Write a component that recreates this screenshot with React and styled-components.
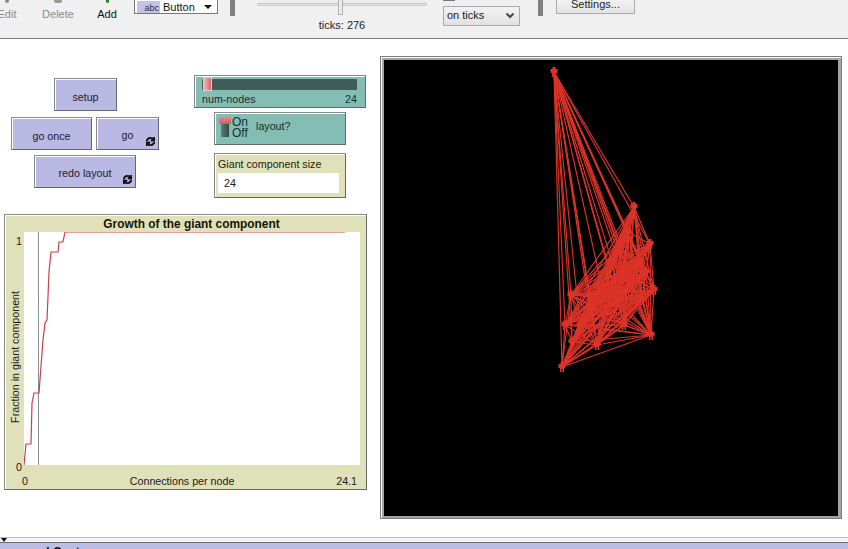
import React from 'react';
import styled, { createGlobalStyle } from 'styled-components';
import { FaSync } from 'react-icons/fa';

const GlobalStyle = createGlobalStyle`
  html, body {
    margin: 0;
    padding: 0;
    background: white;
    overflow: hidden;
  }
  body {
    font-family: "Liberation Sans", Arial, sans-serif;
    font-size: 10.7px;
    color: #1a1a1a;
  }
`;

// turtle positions in page pixels
const NODES = [
  [554, 72], [634, 207], [650, 244], [654, 290], [651, 335], [571, 295],
  [565, 325], [597, 345], [562, 367], [624, 325], [628, 232], [612, 262],
  [640, 262], [630, 285], [590, 312], [642, 300], [620, 248], [580, 325],
  [603, 292], [618, 300], [622, 272], [572, 342], [646, 272], [590, 296],
];

const EDGES = NODES.flatMap((a, i) => NODES.slice(i + 1).map(b => [a, b]));

const CURVE = [
  [24, 465], [26, 444], [31, 444], [32, 403], [34, 393], [39, 393], [42, 353],
  [43, 340], [45, 323], [47, 320], [49, 272], [51, 252], [58, 252], [59, 242],
  [63, 242], [65, 232], [345, 232],
].map(p => p.join(',')).join(' ');

const App = () => {
  return (
    <Page>
      <GlobalStyle />
      <Toolbar>
        <Tool $w={24} $ml={-5}>
          <ToolIcon $color="#8a8a8a" $size={4} />
          Edit
        </Tool>
        <Tool $w={40} $ml={19}>
          <ToolIcon $color="#9a9a9a" $size={8} />
          Delete
        </Tool>
        <Tool $w={40} $ml={9} $active>
          <ToolIcon $color="#2e7d3a" $size={3} />
          Add
        </Tool>
        <WidgetPicker>
          <PickerSwatch>abc</PickerSwatch>
          <PickerText>Button</PickerText>
          <PickerArrow />
        </WidgetPicker>
        <Divider $ml={12} />
        <SpeedBlock>
          <SpeedTrack>
            <SpeedThumb />
          </SpeedTrack>
          <Ticks>ticks: 276</Ticks>
        </SpeedBlock>
        <UpdateBlock>
          <UpdateCheck />
          <UpdateSelect>
            on ticks
            <svg width="10" height="7" viewBox="0 0 10 7">
              <path d="M1.5 1.5 L5 5 L8.5 1.5" fill="none" stroke="#444" strokeWidth="2" />
            </svg>
          </UpdateSelect>
        </UpdateBlock>
        <Divider $ml={18} />
        <SettingsButton>Settings...</SettingsButton>
      </Toolbar>

      <Canvas>
        <SimButton $x={54} $y={39} $w={63}>setup</SimButton>
        <SimButton $x={11} $y={78} $w={81}>go once</SimButton>
        <SimButton $x={96} $y={78} $w={63} $forever>
          go
          <LoopIcon><FaSync size={9} /></LoopIcon>
        </SimButton>
        <SimButton $x={34} $y={116} $w={102} $forever>
          redo layout
          <LoopIcon><FaSync size={9} /></LoopIcon>
        </SimButton>

        <Slider>
          <SliderTrack>
            <SliderKnob />
          </SliderTrack>
          <SliderRow>
            <span>num-nodes</span>
            <span>24</span>
          </SliderRow>
        </Slider>

        <Switch>
          <SwitchToggle>
            <SwitchHead />
          </SwitchToggle>
          <SwitchStates>
            <span>On</span>
            <span>Off</span>
          </SwitchStates>
          <SwitchLabel>layout?</SwitchLabel>
        </Switch>

        <Monitor>
          <MonitorLabel>Giant component size</MonitorLabel>
          <MonitorValue>24</MonitorValue>
        </Monitor>

        <Plot>
          <PlotTitle>Growth of the giant component</PlotTitle>
          <YAxis>
            <span>1</span>
            <YLabel>Fraction in giant component</YLabel>
            <span>0</span>
          </YAxis>
          <PlotArea>
            <svg width="336" height="233" viewBox="24 232 336 233">
              <line x1="38.5" y1="232" x2="38.5" y2="465" stroke="#8c8c8c" />
              <polyline points={CURVE} fill="none" stroke="#c8404a" strokeWidth="1.2" />
            </svg>
          </PlotArea>
          <XAxis>
            <span>0</span>
            <span>Connections per node</span>
            <span>24.1</span>
          </XAxis>
        </Plot>

        <View>
          <svg width="454" height="456" viewBox="384 60 454 456">
            {EDGES.map(([a, b], i) => (
              <line key={i} x1={a[0]} y1={a[1]} x2={b[0]} y2={b[1]} stroke="#dc3328" strokeWidth="1.15" />
            ))}
            {NODES.map(([x, y], i) => (
              <path
                key={i}
                transform={`translate(${x} ${y})`}
                d="M-1.5 -5 H1.5 V-3 H3.5 V1 H2 V5 H0.5 V2 H-0.5 V5 H-2 V1 H-3.5 V-3 H-1.5 Z"
                fill="#dc3328"
              />
            ))}
          </svg>
        </View>
      </Canvas>

      <Sash>
        <SashArrow />
      </Sash>
      <CommandBar>Command Center</CommandBar>
    </Page>
  );
};

const Page = styled.div`
  width: 848px;
  height: 549px;
  display: flex;
  flex-direction: column;
  overflow: hidden;
`;

const Toolbar = styled.div`
  height: 38px;
  flex: none;
  display: flex;
  align-items: flex-start;
  background: #f0f0f0;
  border-bottom: 1px solid #7c7c7c;
  font-size: 11px;
  overflow: hidden;
`;

const Tool = styled.div`
  width: ${p => p.$w}px;
  margin-left: ${p => p.$ml}px;
  flex: none;
  display: flex;
  flex-direction: column;
  align-items: center;
  gap: 5px;
  line-height: 14px;
  margin-top: 0;
  color: ${p => (p.$active ? '#111' : '#8b8b8b')};
`;

const ToolIcon = styled.div`
  width: ${p => p.$size}px;
  height: 3px;
  margin-top: 0;
  margin-bottom: -1px;
  background: ${p => p.$color};
  border-radius: 0 0 2px 2px;
`;

const WidgetPicker = styled.div`
  width: 84px;
  height: 15px;
  margin-left: 7px;
  margin-top: -1px;
  flex: none;
  box-sizing: border-box;
  display: flex;
  align-items: center;
  background: white;
  border: 1px solid #777;
  padding-left: 2px;
`;

const PickerSwatch = styled.div`
  width: 23px;
  height: 12px;
  flex: none;
  background: #c3c3e6;
  font-size: 9px;
  line-height: 14px;
  text-align: right;
  padding-right: 1px;
  box-sizing: border-box;
  color: #2a2a4a;
`;

const PickerText = styled.div`
  margin-left: 3px;
  flex: 1;
  font-size: 11px;
  line-height: 12px;
  color: #111;
`;

const PickerArrow = styled.div`
  width: 0;
  height: 0;
  margin-right: 5px;
  border-left: 4px solid transparent;
  border-right: 4px solid transparent;
  border-top: 4px solid #111;
`;

const Divider = styled.div`
  width: 5px;
  height: 16px;
  margin-left: ${p => p.$ml}px;
  flex: none;
  background: #808080;
`;

const SpeedBlock = styled.div`
  width: 170px;
  margin-left: 22px;
  flex: none;
  display: flex;
  flex-direction: column;
  align-items: center;
`;

const SpeedTrack = styled.div`
  width: 100%;
  height: 3px;
  margin-top: 3px;
  position: relative;
  background: #e4e4e4;
  border-top: 1px solid #c4c4c4;
  border-bottom: 1px solid #d0d0d0;
  box-sizing: border-box;
`;

const SpeedThumb = styled.div`
  position: absolute;
  left: 81px;
  top: -5px;
  width: 5px;
  height: 16px;
  box-sizing: border-box;
  background: #ececec;
  border: 1px solid #b0b0b0;
`;

const Ticks = styled.div`
  margin-top: 12px;
  line-height: 14px;
  color: #222;
`;

const UpdateBlock = styled.div`
  margin-left: 16px;
  width: 77px;
  flex: none;
  display: flex;
  flex-direction: column;
  align-items: flex-start;
`;

const UpdateCheck = styled.div`
  width: 12px;
  height: 1px;
  margin-bottom: 5px;
  background: #777;
`;

const UpdateSelect = styled.div`
  width: 77px;
  height: 20px;
  box-sizing: border-box;
  display: flex;
  align-items: center;
  justify-content: space-between;
  padding: 0 4px 2px 3px;
  background: linear-gradient(#f2f2f2, #e2e2e2);
  border: 1px solid #ababab;
  color: #222;
`;

const SettingsButton = styled.div`
  width: 79px;
  height: 15px;
  margin-left: 13px;
  margin-top: -1px;
  flex: none;
  box-sizing: border-box;
  text-align: center;
  line-height: 8px;
  background: linear-gradient(#f2f2f2, #e4e4e4);
  border: 1px solid #ababab;
  color: #222;
`;

const Canvas = styled.div`
  position: relative;
  height: 498px;
  flex: none;
  background: white;
`;

const bevel = `
  box-sizing: border-box;
  position: absolute;
  border: 1px solid;
  border-color: #8a8a8a #5f6b6b #5f6b6b #8a8a8a;
  box-shadow: inset 1px 1px 0 #ffffff;
`;

const SimButton = styled.div`
  ${bevel}
  left: ${p => p.$x}px;
  top: ${p => p.$y}px;
  width: ${p => p.$w}px;
  height: 33px;
  display: flex;
  align-items: center;
  justify-content: center;
  padding-top: ${p => (p.$forever ? 2 : 4)}px;
  background: #b9b9e3;
  color: #1c1c2c;
`;

const LoopIcon = styled.span`
  position: absolute;
  right: 3px;
  bottom: 3px;
  display: flex;
  color: #111;
  & svg {
    stroke: #111;
    stroke-width: 50px;
  }
`;

const Slider = styled.div`
  ${bevel}
  left: 194px;
  top: 36px;
  width: 172px;
  height: 33px;
  padding: 3px 8px 0 7px;
  background: #84bdb4;
`;

const SliderTrack = styled.div`
  height: 11px;
  position: relative;
  background: #3f5c58;
  border-radius: 1px;
`;

const SliderKnob = styled.div`
  position: absolute;
  left: 1px;
  top: -2px;
  width: 9px;
  height: 14px;
  background: linear-gradient(90deg, #f3b3b3, #d9666c);
  border: 1px solid #e8c8c8;
  box-sizing: border-box;
`;

const SliderRow = styled.div`
  display: flex;
  justify-content: space-between;
  margin-top: 2px;
  line-height: 14px;
  color: #16302c;
`;

const Switch = styled.div`
  ${bevel}
  left: 214px;
  top: 73px;
  width: 132px;
  height: 33px;
  display: flex;
  align-items: flex-start;
  padding: 4px 0 0 6px;
  background: #84bdb4;
`;

const SwitchToggle = styled.div`
  width: 8px;
  height: 20px;
  position: relative;
  background: linear-gradient(90deg, #5f7d78, #2f4a46);
`;

const SwitchHead = styled.div`
  position: absolute;
  left: -2px;
  top: 0;
  width: 12px;
  height: 7px;
  background: linear-gradient(#e88a8e, #cf5a60);
`;

const SwitchStates = styled.div`
  margin-left: 3px;
  display: flex;
  flex-direction: column;
  line-height: 11px;
  font-size: 12px;
  color: #16302c;
`;

const SwitchLabel = styled.div`
  margin-left: 8px;
  line-height: 18px;
  color: #16302c;
`;

const Monitor = styled.div`
  ${bevel}
  left: 214px;
  top: 114px;
  width: 132px;
  height: 45px;
  display: flex;
  flex-direction: column;
  padding: 3px 6px 5px 3px;
  background: #e0e0b9;
`;

const MonitorLabel = styled.div`
  line-height: 14px;
  color: #1c1c12;
`;

const MonitorValue = styled.div`
  flex: 1;
  margin-top: 2px;
  padding-left: 6px;
  line-height: 20px;
  background: white;
`;

const Plot = styled.div`
  ${bevel}
  left: 4px;
  top: 175px;
  width: 363px;
  height: 276px;
  display: grid;
  grid-template-columns: 19px 336px 1fr;
  grid-template-rows: 17px 233px 1fr;
  background: #e0e0b9;
`;

const PlotTitle = styled.div`
  grid-column: 1 / -1;
  text-align: center;
  padding-left: 12px;
  font-weight: bold;
  font-size: 11.9px;
  line-height: 18px;
  color: #141408;
`;

const YAxis = styled.div`
  grid-column: 1;
  display: flex;
  flex-direction: column;
  justify-content: space-between;
  align-items: flex-end;
  padding: 2px 2px 0 0;
  margin-bottom: -9px;
  line-height: 14px;
`;

const YLabel = styled.div`
  writing-mode: vertical-rl;
  transform: rotate(180deg);
  align-self: center;
  margin-left: 2px;
  margin-top: 6px;
  line-height: 14px;
`;

const PlotArea = styled.div`
  grid-column: 2;
  background: white;
  display: flex;
  & svg {
    display: block;
  }
`;

const XAxis = styled.div`
  grid-column: 1 / -1;
  display: flex;
  justify-content: space-between;
  padding: 9px 9px 0 17px;
  line-height: 14px;
`;

const View = styled.div`
  position: absolute;
  left: 380px;
  top: 17px;
  width: 462px;
  height: 463px;
  box-sizing: border-box;
  border: 1px solid #7a7a7a;
  padding: 3px 3px 2px;
  background: #a4a4a4;
  box-shadow: inset 1px 1px 0 #fff;
  & svg {
    display: block;
    background: black;
  }
`;

const Sash = styled.div`
  height: 6px;
  flex: none;
  box-sizing: border-box;
  background: #f4f4f4;
  border-top: 1px solid #c0c0c0;
  border-bottom: 1px solid #6e6e6e;
  padding-left: 1px;
`;

const SashArrow = styled.div`
  width: 0;
  height: 0;
  border-left: 3px solid transparent;
  border-right: 3px solid transparent;
  border-top: 4px solid #111;
`;

const CommandBar = styled.div`
  flex: 1;
  background: #bcbce4;
  padding-top: 2px;
  text-indent: -9px;
  font-weight: bold;
  font-size: 12px;
  line-height: 14px;
  color: #111;
`;

export default App;
